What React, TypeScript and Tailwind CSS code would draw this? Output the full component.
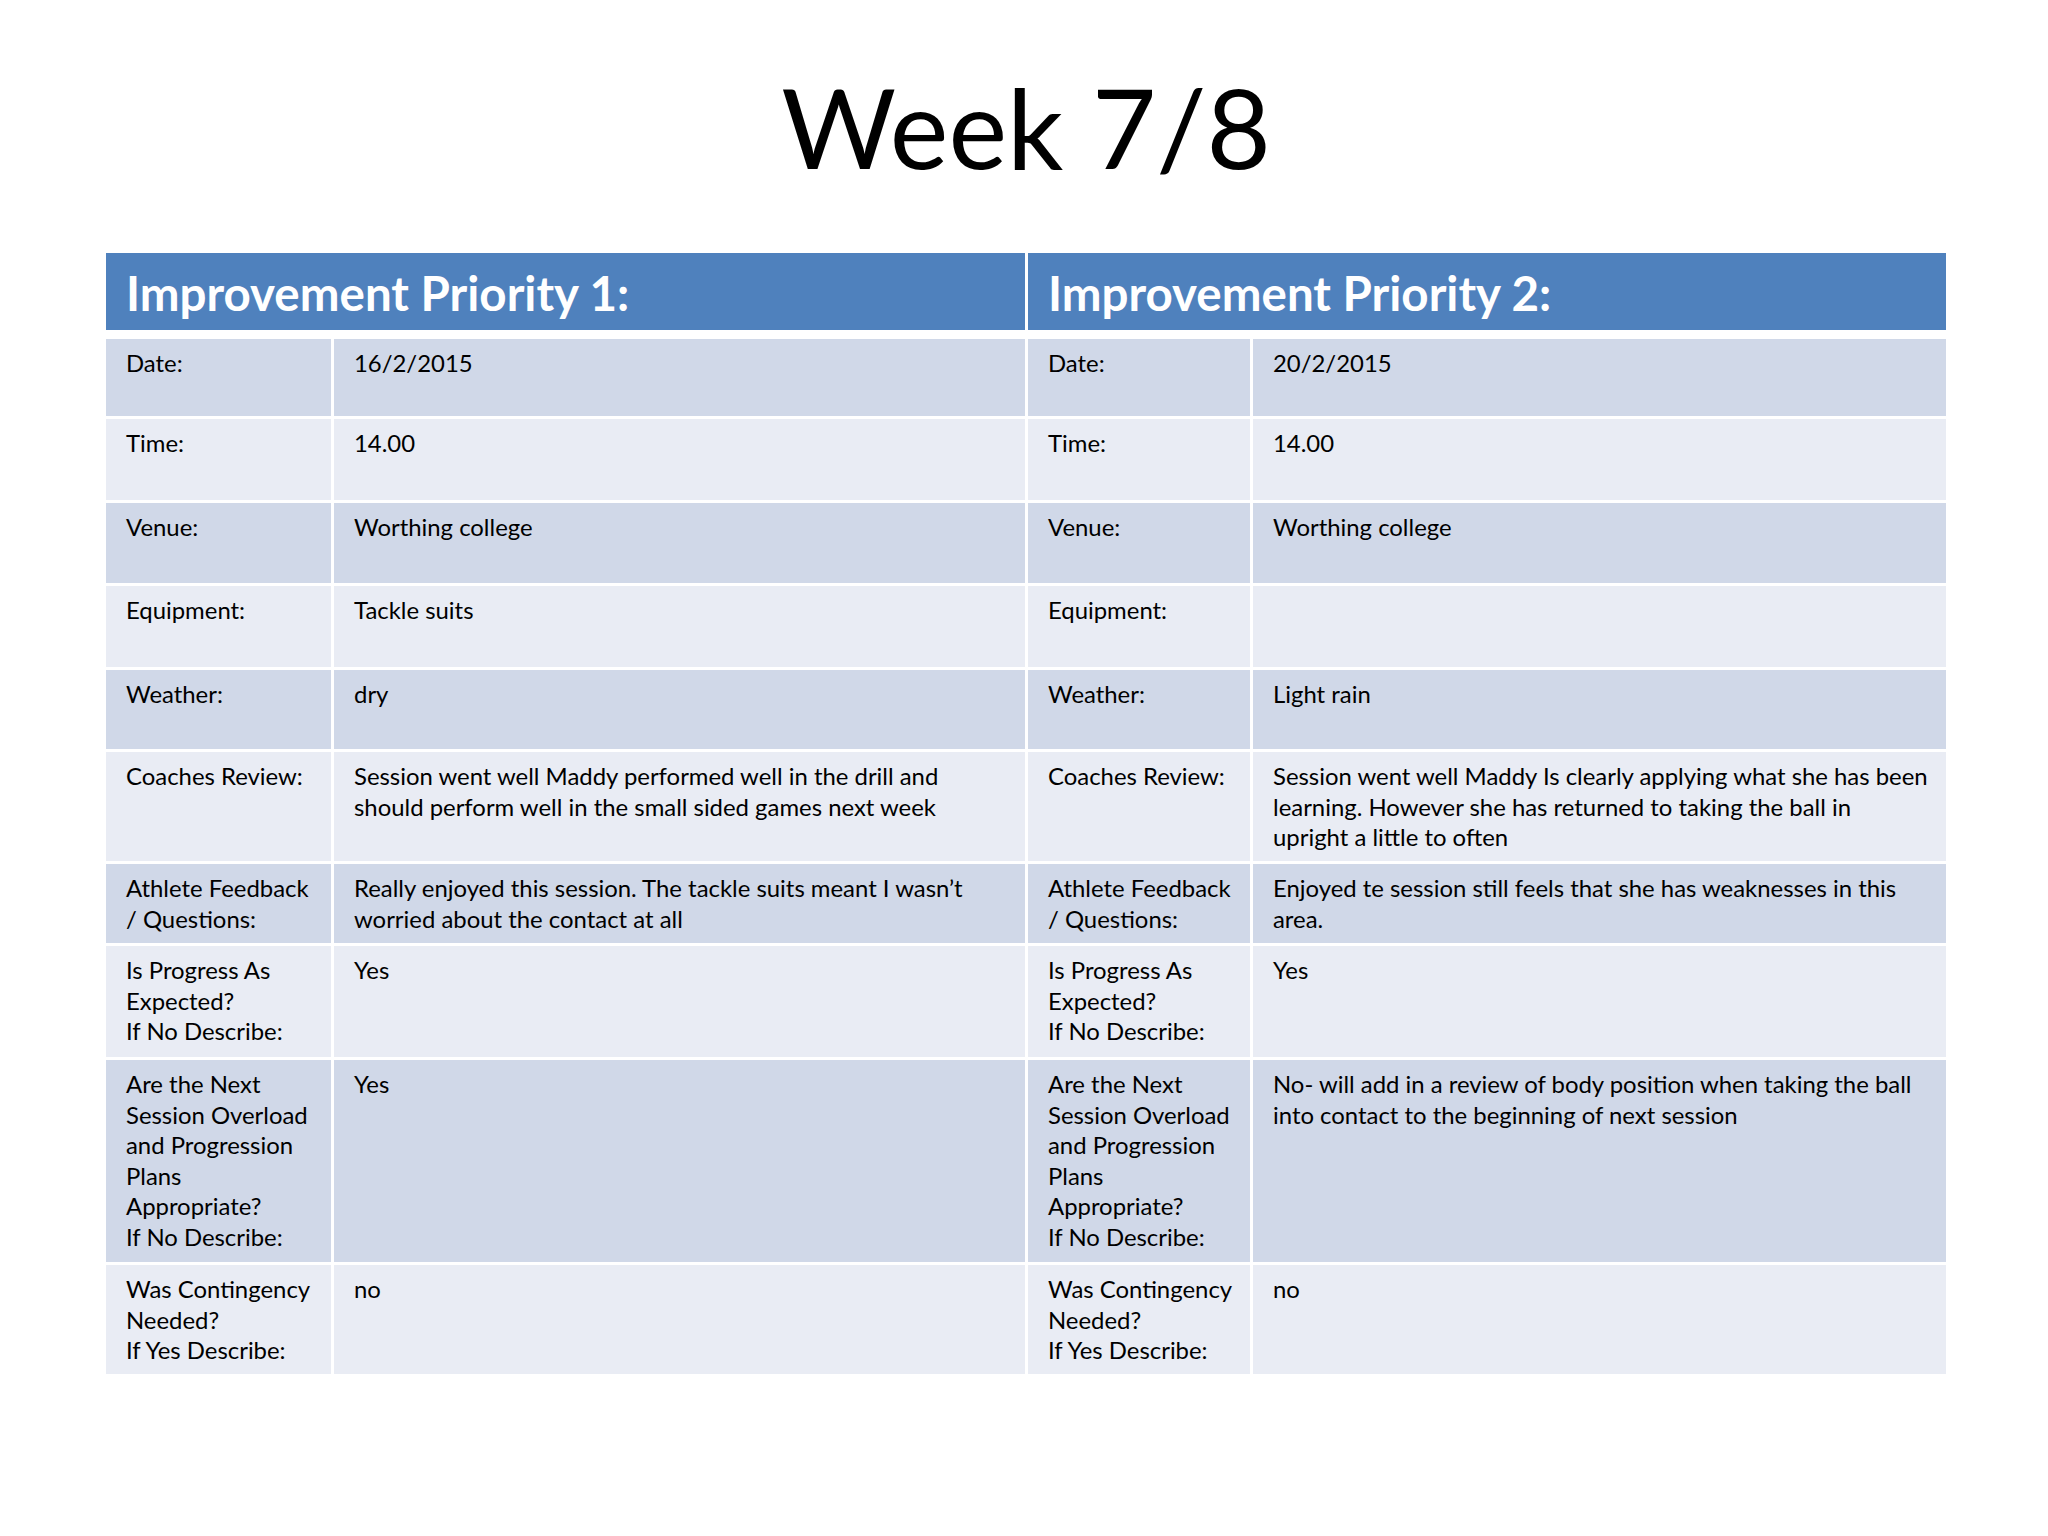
type Row = {
  label: string[];
  left: string[];
  right: string[];
  h: string;
  dark: boolean;
};

const rows: Row[] = [
  { label: ['Date:'], left: ['16/2/2015'], right: ['20/2/2015'], h: 'h-[77px]', dark: true },
  { label: ['Time:'], left: ['14.00'], right: ['14.00'], h: 'h-[81px]', dark: false },
  { label: ['Venue:'], left: ['Worthing college'], right: ['Worthing college'], h: 'h-[80px]', dark: true },
  { label: ['Equipment:'], left: ['Tackle suits'], right: [], h: 'h-[81px]', dark: false },
  { label: ['Weather:'], left: ['dry'], right: ['Light rain'], h: 'h-[79px]', dark: true },
  {
    label: ['Coaches Review:'],
    left: [
      'Session went well Maddy performed well in the drill and',
      'should perform well in the small sided games next week',
    ],
    right: [
      'Session went well Maddy Is clearly applying what she has been',
      'learning. However she has returned to taking the ball in',
      'upright a little to often',
    ],
    h: 'h-[109px]',
    dark: false,
  },
  {
    label: ['Athlete Feedback', '/ Questions:'],
    left: ['Really enjoyed this session. The tackle suits meant I wasn\u2019t', 'worried about the contact at all'],
    right: ['Enjoyed te session still feels that she has weaknesses in this', 'area.'],
    h: 'h-[79px]',
    dark: true,
  },
  {
    label: ['Is Progress As', 'Expected?', 'If No Describe:'],
    left: ['Yes'],
    right: ['Yes'],
    h: 'h-[111px]',
    dark: false,
  },
  {
    label: ['Are the Next', 'Session Overload', 'and Progression', 'Plans', 'Appropriate?', 'If No Describe:'],
    left: ['Yes'],
    right: [
      'No- will add in a review of body position when taking the ball',
      'into contact to the beginning of next session',
    ],
    h: 'h-[202px]',
    dark: true,
  },
  {
    label: ['Was Contingency', 'Needed?', 'If Yes Describe:'],
    left: ['no'],
    right: ['no'],
    h: 'h-[109px]',
    dark: false,
  },
];

const Cell = ({ lines, h, dark }: { lines: string[]; h: string; dark: boolean }) => (
  <div className={`${h} ${dark ? 'bg-[#d0d8e8]' : 'bg-[#e9ecf4]'} pl-[20px] pr-[10px] pt-[9px] overflow-visible`}>
    {lines.map((l, i) => (
      <div key={i} className="whitespace-nowrap">
        {l}
      </div>
    ))}
  </div>
);

export default function App() {
  return (
    <div className="w-[2048px] h-[1536px] bg-white font-['Lato',sans-serif] text-black">
      <div className="w-[1840px] ml-[106px] pt-[71px]">
        <h1 className="text-center text-[111px] leading-none font-normal">Week 7/8</h1>

        <div className="mt-[71px] grid grid-cols-[225px_691px_222px_693px] gap-x-[3px]">
          <div className="col-span-2 h-[77px] bg-[#4f81bd] pl-[20px] text-white font-bold text-[47.5px] leading-[80px] whitespace-nowrap">
            Improvement Priority 1:
          </div>
          <div className="col-span-2 h-[77px] bg-[#4f81bd] pl-[20px] text-white font-bold text-[47.5px] leading-[80px] whitespace-nowrap">
            Improvement Priority 2:
          </div>
        </div>

        <div className="mt-[9px] grid grid-cols-[225px_691px_222px_693px] gap-x-[3px] gap-y-[3px] text-[23.9px] leading-[30.5px]">
          {rows.map((r, i) => (
            <div key={i} className="contents">
              <Cell lines={r.label} h={r.h} dark={r.dark} />
              <Cell lines={r.left} h={r.h} dark={r.dark} />
              <Cell lines={r.label} h={r.h} dark={r.dark} />
              <Cell lines={r.right} h={r.h} dark={r.dark} />
            </div>
          ))}
        </div>
      </div>
    </div>
  );
}
